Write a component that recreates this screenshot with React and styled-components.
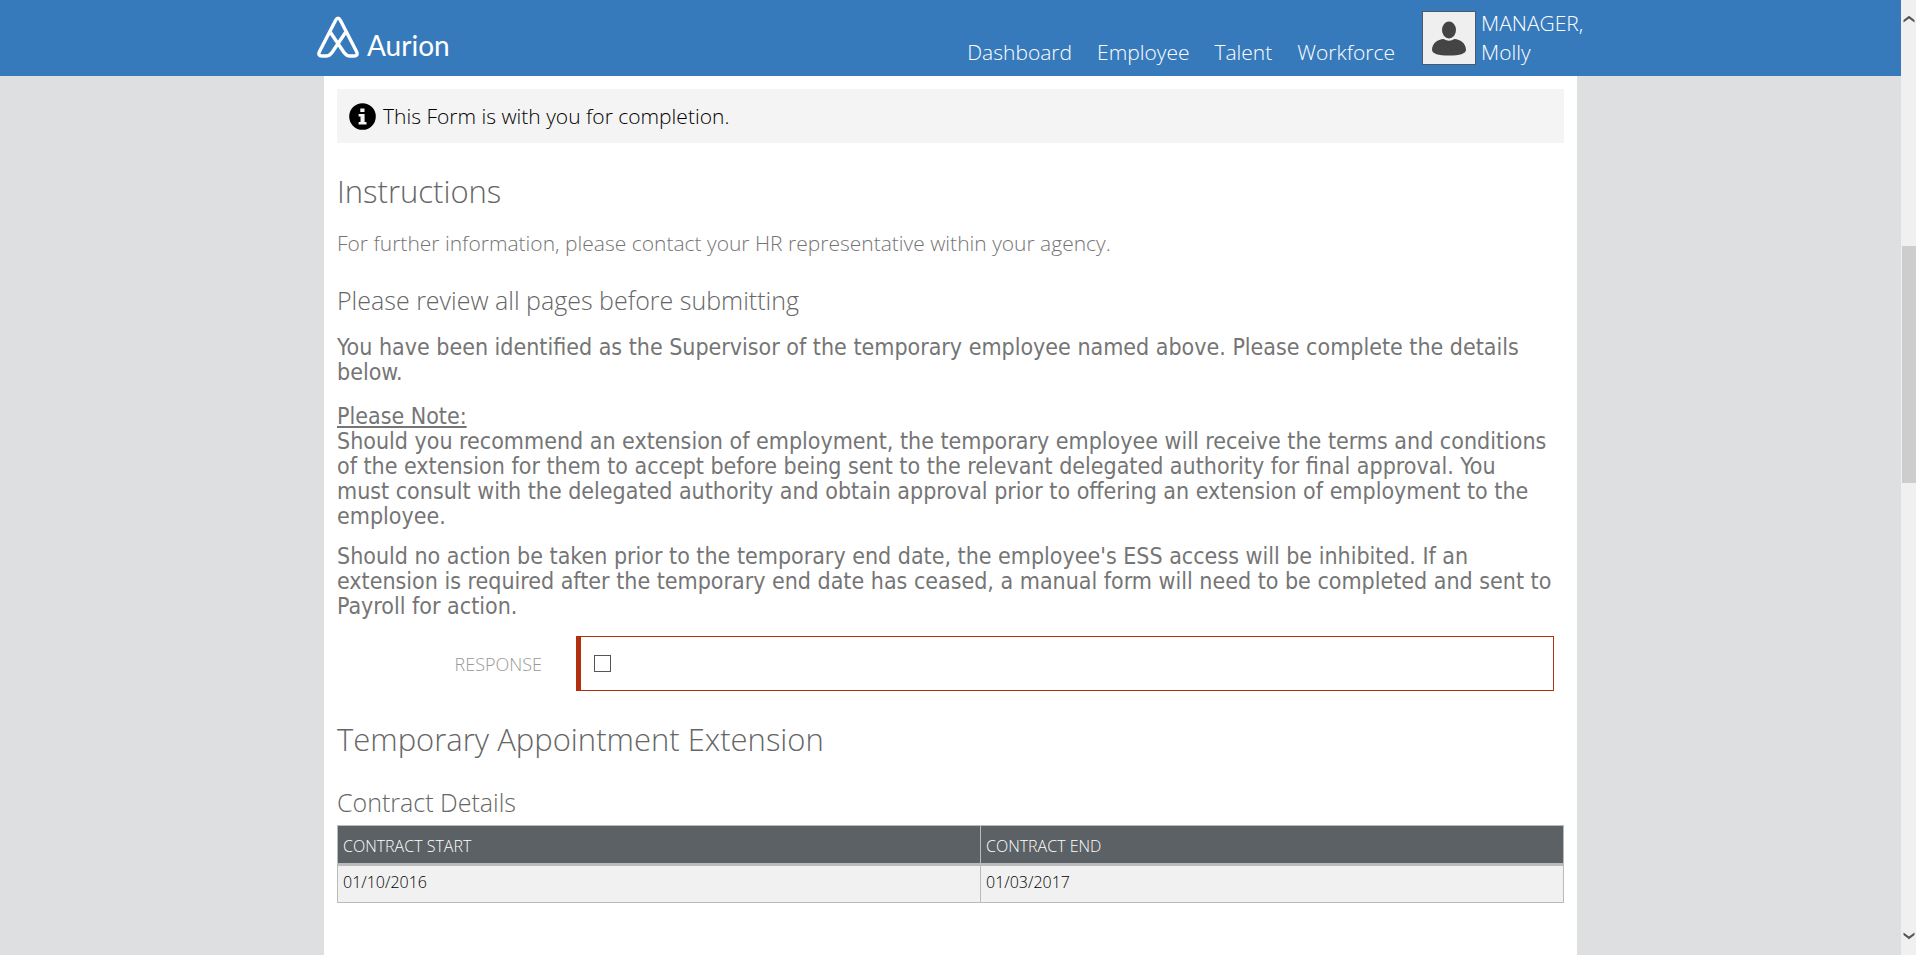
import React from "react";
import styled, { createGlobalStyle } from "styled-components";

const GlobalStyle = createGlobalStyle`
  * { box-sizing: border-box; }
  body {
    margin: 0;
    background: #dedfe1;
    font-family: "Open Sans", "Noto Sans", sans-serif;
    font-weight: 300;
    color: #757575;
  }
  h2, h3, p { margin: 0; font-weight: 300; }
`;

const Screen = styled.div`
  display: grid;
  grid-template-columns: minmax(0, 1fr) 15px;
  min-height: 100vh;
`;

const Page = styled.div`
  display: flex;
  flex-direction: column;
`;

const Header = styled.header`
  display: flex;
  justify-content: center;
  height: 76px;
  padding: 0 16px;
  background: #377abc;
  color: #fff;
`;

const HeaderInner = styled.div`
  display: flex;
  justify-content: space-between;
  width: 100%;
  max-width: 1267px;
`;

const Logo = styled.a`
  display: flex;
  align-items: flex-end;
  gap: 8px;
  height: 59px;
  color: #fff;
  text-decoration: none;
`;

const LogoMark = styled.svg`
  width: 42px;
  height: 44px;
`;

const LogoName = styled.span`
  font: 400 28px/28px Lato, sans-serif;
`;

const HeaderRight = styled.div`
  display: flex;
  gap: 27px;
`;

const Nav = styled.nav`
  display: flex;
  gap: 25px;
  padding-top: 38px;
`;

const NavLink = styled.a`
  color: #fff;
  font-size: 21px;
  line-height: 29px;
  text-decoration: none;
`;

const User = styled.div`
  display: flex;
  gap: 5px;
  width: 162px;
`;

const Avatar = styled.svg`
  flex: none;
  width: 54px;
  height: 54px;
  margin-top: 11px;
  border: 1px solid #4a5a68;
  background: #f0eff0;
`;

const UserName = styled.span`
  padding-top: 9px;
  font-size: 21px;
  line-height: 29px;
`;

const Panel = styled.main`
  flex: 1;
  width: 100%;
  max-width: 1253px;
  margin: 0 auto;
  padding: 13px;
  background: #fff;
`;

const Notice = styled.div`
  display: flex;
  align-items: center;
  gap: 7px;
  height: 54px;
  padding: 0 12px;
  background: #f4f4f4;
  color: #000;
  font-size: 21px;
`;

const Title = styled.h2`
  margin-top: 28px;
  font-size: 31px;
  line-height: 40px;
  color: #666;
`;

const Subtitle = styled.h3`
  margin-top: 27px;
  font-size: 25px;
  line-height: 32px;
  color: #666;
`;

const Lead = styled.p`
  margin-top: 18px;
  font-size: 21px;
  line-height: 28px;
`;

const Paragraph = styled.p`
  margin-top: ${(p) => (p.$tight ? 15 : 19)}px;
  font: 400 23px/25px "DejaVu Sans Condensed", "DejaVu Sans", sans-serif;
`;

const Field = styled.div`
  display: grid;
  grid-template-columns: 205px minmax(0, 1fr);
  column-gap: 34px;
  align-items: center;
  margin: 17px 10px 0 0;
`;

const Label = styled.label`
  text-align: right;
  text-transform: uppercase;
  font-size: 18px;
  color: #999;
`;

const FieldBox = styled.div`
  display: flex;
  align-items: center;
  height: 55px;
  padding-left: 13px;
  border: 1px solid #b03010;
  border-left-width: 5px;
`;

const Checkbox = styled.input`
  appearance: none;
  width: 17px;
  height: 17px;
  margin: 0;
  border: 1px solid #555;
  background: #fff;
`;

const Table = styled.table`
  width: 100%;
  margin-top: 7px;
  border-collapse: collapse;
  table-layout: fixed;
  font-size: 16px;
`;

const FirstCol = styled.col`
  width: 643px;
`;

const HeadCell = styled.th`
  height: 39px;
  padding: 2px 5px 0;
  border: 1px solid #b9bbbd;
  border-bottom-width: 3px;
  background: #5b6165;
  color: #fff;
  font-weight: 300;
  text-align: left;
  text-transform: uppercase;
`;

const Cell = styled.td`
  height: 38px;
  padding: 0 5px 5px;
  border: 1px solid #b9bbbd;
  background: #f1f1f1;
  color: #000;
`;

const ScrollTrack = styled.div`
  display: flex;
  flex-direction: column;
  align-items: flex-end;
  height: 100vh;
  background: #f0f0f0;
`;

const ScrollButton = styled.button`
  display: flex;
  align-items: center;
  justify-content: center;
  width: 14px;
  height: 38px;
  padding: 0;
  border: 0;
  background: none;
`;

const ScrollRail = styled.div`
  display: flex;
  flex-direction: column;
  flex: 1;
  width: 14px;

  &::before { content: ""; flex: 208; }
  &::after { content: ""; flex: 434; }
`;

const ScrollThumb = styled.div`
  flex: 237;
  background: #cdcdcd;
`;

const NAV_ITEMS = ["Dashboard", "Employee", "Talent", "Workforce"];

const CONTRACTS = [{ start: "01/10/2016", end: "01/03/2017" }];

function InfoIcon() {
  return (
    <svg width="27" height="27" viewBox="0 0 27 27" aria-hidden="true">
      <circle cx="13.5" cy="13.5" r="13.3" fill="#000" />
      <path
        d="M11.3 5.4h4.2v3.6h-4.2zM9.6 11h6v7.9h1.9v2.5H9.6v-2.5h1.9v-5.3H9.6z"
        fill="#f4f4f4"
      />
    </svg>
  );
}

function AurionMark() {
  return (
    <LogoMark viewBox="0 0 42 44" fill="none" stroke="#fff" strokeWidth="3.4" strokeLinejoin="round" strokeLinecap="round" aria-hidden="true">
      <path d="M13.500 17.500 L27 37.500 Q29.500 41 33 41 H37 Q41.500 41 39.500 36.500 L23.500 5.500 Q21 1 18.500 5.500 L2.500 36.500 Q0.500 41 5 41 H9 Q12.500 41 15 37.500 L28.500 17.500" />
    </LogoMark>
  );
}

function Chevron({ down }) {
  return (
    <svg width="12" height="8" viewBox="0 0 12 8" fill="#555" aria-hidden="true">
      <path d={down ? "M0.500 0.500V3L6 7.300 11.500 3V0.500L6 4.500z" : "M0.500 7.500V5L6 0.700 11.500 5V7.500L6 3.500z"} />
    </svg>
  );
}

export default function App() {
  return (
    <Screen>
      <GlobalStyle />
      <Page>
        <Header>
          <HeaderInner>
            <Logo href="#">
              <AurionMark />
              <LogoName>Aurion</LogoName>
            </Logo>
            <HeaderRight>
              <Nav>
                {NAV_ITEMS.map((item) => (
                  <NavLink key={item} href="#">{item}</NavLink>
                ))}
              </Nav>
              <User>
                <Avatar viewBox="0 0 52 52" aria-hidden="true">
                  <ellipse cx="26" cy="18" rx="7" ry="8.500" fill="#444" />
                  <path d="M9 38C9 31 15 27.500 20.500 27Q26 30.500 31.500 27C37 27.500 43 31 43 38Q42.500 43.500 26 43.500T9 38z" fill="#444" />
                </Avatar>
                <UserName>MANAGER, Molly</UserName>
              </User>
            </HeaderRight>
          </HeaderInner>
        </Header>
        <Panel>
          <Notice>
            <InfoIcon />
            <span>This Form is with you for completion.</span>
          </Notice>
          <Title>Instructions</Title>
          <Lead>For further information, please contact your HR representative within your agency.</Lead>
          <Subtitle>Please review all pages before submitting</Subtitle>
          <Paragraph>
            You have been identified as the Supervisor of the temporary employee named above. Please complete the details below.
          </Paragraph>
          <Paragraph>
            <u>Please Note:</u>
            <br />
            Should you recommend an extension of employment, the temporary employee will receive the terms and conditions of the extension for them to accept before being sent to the relevant delegated authority for final approval. You
            <br />
            must consult with the delegated authority and obtain approval prior to offering an extension of employment to the employee.
          </Paragraph>
          <Paragraph $tight>
            Should no action be taken prior to the temporary end date, the employee's ESS access will be inhibited. If an extension is required after the temporary end date has ceased, a manual form will need to be completed and sent to Payroll for action.
          </Paragraph>
          <Field>
            <Label htmlFor="response">Response</Label>
            <FieldBox>
              <Checkbox type="checkbox" id="response" />
            </FieldBox>
          </Field>
          <Title>Temporary Appointment Extension</Title>
          <Subtitle>Contract Details</Subtitle>
          <Table>
            <colgroup>
              <FirstCol />
              <col />
            </colgroup>
            <thead>
              <tr>
                <HeadCell scope="col">Contract Start</HeadCell>
                <HeadCell scope="col">Contract End</HeadCell>
              </tr>
            </thead>
            <tbody>
              {CONTRACTS.map((contract) => (
                <tr key={contract.start}>
                  <Cell>{contract.start}</Cell>
                  <Cell>{contract.end}</Cell>
                </tr>
              ))}
            </tbody>
          </Table>
        </Panel>
      </Page>
      <ScrollTrack>
        <ScrollButton type="button" aria-label="Scroll up">
          <Chevron />
        </ScrollButton>
        <ScrollRail>
          <ScrollThumb />
        </ScrollRail>
        <ScrollButton type="button" aria-label="Scroll down">
          <Chevron down />
        </ScrollButton>
      </ScrollTrack>
    </Screen>
  );
}
